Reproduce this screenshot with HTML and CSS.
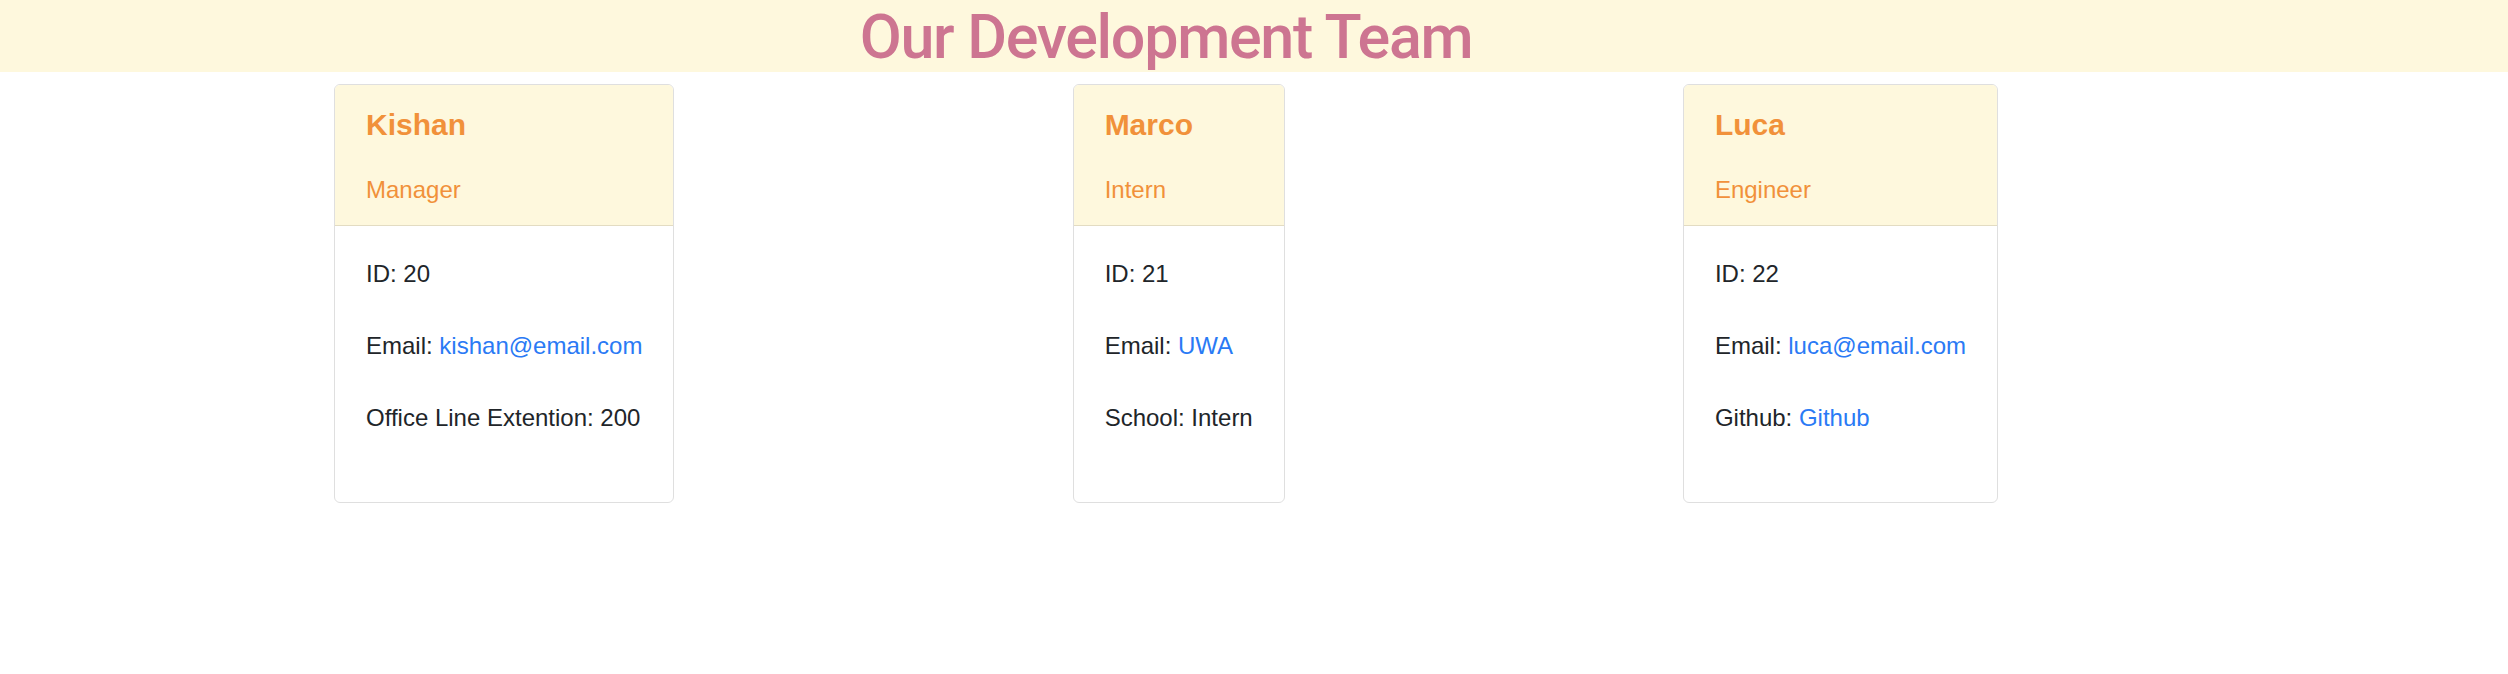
FILE: index.html
```html
<!DOCTYPE html>
<html lang="en">
<head>
<meta charset="utf-8">
<title>Our Development Team</title>
<link rel="stylesheet" href="styles.css">
</head>
<body>
<header class="banner">
  <div class="container">
    <h1 class="banner-title">Our Development Team</h1>
  </div>
</header>
<main class="container team">
  <section class="card">
    <div class="card-header">
      <h2 class="card-name">Kishan</h2>
      <h3 class="card-role">Manager</h3>
    </div>
    <div class="card-body">
      <p>ID: 20</p>
      <p>Email: <a href="#">kishan@email.com</a></p>
      <p>Office Line Extention: 200</p>
    </div>
  </section>
  <section class="card">
    <div class="card-header">
      <h2 class="card-name">Marco</h2>
      <h3 class="card-role">Intern</h3>
    </div>
    <div class="card-body">
      <p>ID: 21</p>
      <p>Email: <a href="#">UWA</a></p>
      <p>School: Intern</p>
    </div>
  </section>
  <section class="card">
    <div class="card-header">
      <h2 class="card-name">Luca</h2>
      <h3 class="card-role">Engineer</h3>
    </div>
    <div class="card-body">
      <p>ID: 22</p>
      <p>Email: <a href="#">luca@email.com</a></p>
      <p>Github: <a href="#">Github</a></p>
    </div>
  </section>
</main>
</body>
</html>
```
FILE: styles.css
```css
* {
  box-sizing: border-box;
}

body {
  margin: 0;
  font-family: "Liberation Sans", Arial, Helvetica, sans-serif;
  color: #212529;
  background: #ffffff;
}

.container {
  width: 1664px;
  margin-left: 334px;
}

.banner {
  background: #fef8dd;
  height: 72px;
}

.banner-title {
  margin: 0;
  padding-top: 3px;
  font-family: Roboto, "Liberation Sans", Arial, sans-serif;
  font-size: 61px;
  line-height: 69px;
  font-weight: 500;
  letter-spacing: -1.3px;
  text-align: center;
  color: #cd7591;
}

.team {
  display: flex;
  justify-content: space-between;
  align-items: flex-start;
  margin-top: 12px;
}

.card {
  border: 1px solid #dfdfdf;
  border-radius: 6px;
  overflow: hidden;
  background: #ffffff;
}

.card-header {
  background: #fef8dd;
  border-bottom: 1px solid #e3dcc2;
  padding: 22px 31px 21px;
}

.card-name {
  margin: 0 0 32px;
  font-size: 30px;
  line-height: 36px;
  font-weight: 700;
  color: #f1913a;
}

.card-role {
  margin: 0;
  font-size: 24px;
  line-height: 29px;
  font-weight: 400;
  color: #f1913a;
}

.card-body {
  padding: 30px 31px;
}

.card-body p {
  margin: 0 0 36px;
  font-size: 24px;
  line-height: 36px;
  white-space: nowrap;
}

.card-body a {
  color: #2a7af5;
  text-decoration: none;
}
```
